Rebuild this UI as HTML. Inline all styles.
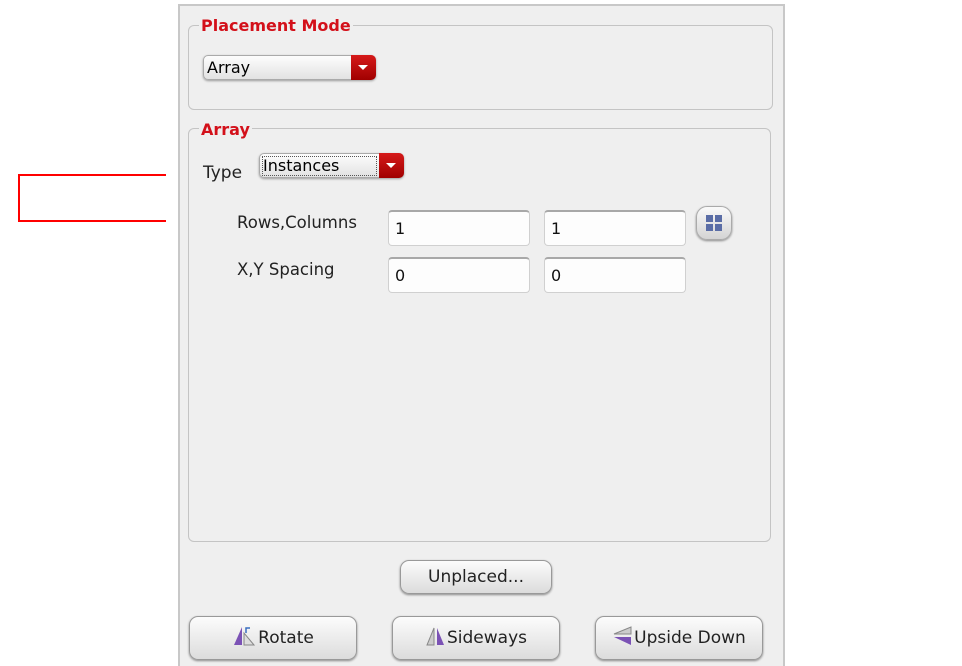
<!DOCTYPE html>
<html><head><style>
body{margin:0;width:962px;height:653px;background:#fff;position:relative;overflow:hidden;font-family:"DejaVu Sans","Liberation Sans",sans-serif;}
.panel{position:absolute;left:178px;top:4px;width:603px;height:660px;background:#efefef;border-left:2px solid #c8c8c8;border-right:2px solid #c8c8c8;border-top:2px solid #c8c8c8;}
.grp{position:absolute;border:1px solid #c4c4c4;border-radius:6px;}
.lg{position:absolute;color:#d3101a;font-weight:bold;font-size:16px;background:#efefef;padding:0 2px;}
.combo{position:absolute;height:25px;border:1px solid #aaa;border-radius:5px;background:linear-gradient(#fdfdfd,#e2e2e2);box-shadow:0 1px 2px #999;font-size:16px;box-sizing:border-box;}
.combo .arr{position:absolute;right:-1px;top:-1px;width:25px;height:25px;background:linear-gradient(#d61a1a,#a00000);border-radius:0 5px 5px 0;}
.combo .arr:after{content:"";position:absolute;left:7px;top:10px;border-left:5px solid transparent;border-right:5px solid transparent;border-top:5px solid #fff;}
.lbl{position:absolute;font-size:16.5px;color:#222;}
.inp{position:absolute;width:142px;height:36px;box-sizing:border-box;background:#fdfdfd;border:1px solid #d0d0d0;border-top:2px solid #a8a8a8;border-radius:4px;font-size:16px;padding:7px 6px;color:#111;}
.btn{position:absolute;height:34px;box-sizing:border-box;border:1px solid #999;border-radius:9px;background:linear-gradient(#fcfcfc,#dcdcdc);box-shadow:0 1px 2px #888;font-size:17px;color:#222;text-align:center;line-height:32px;}
</style></head><body>
<div style="position:absolute;left:18px;top:174px;width:146px;height:44px;border:2px solid #f00;border-right:none;"></div>
<div class="panel"></div>
<div class="grp" style="left:188px;top:25px;width:583px;height:83px;"></div>
<div class="lg" style="left:199px;top:16px;">Placement Mode</div>
<div class="combo" style="left:203px;top:55px;width:173px;"><span style="position:absolute;left:3px;top:2px;">Array</span><div class="arr"></div></div>
<div class="grp" style="left:188px;top:128px;width:581px;height:412px;"></div>
<div class="lg" style="left:199px;top:120px;">Array</div>
<div class="lbl" style="left:203px;top:163px;font-size:17px;">Type</div>
<div class="combo" style="left:259px;top:153px;width:145px;"><span style="position:absolute;left:2px;top:2px;border:1px dotted #555;width:113px;height:18px;line-height:17px;">Instances</span><div class="arr"></div></div>
<div class="lbl" style="left:237px;top:213px;">Rows,Columns</div>
<div class="lbl" style="left:237px;top:260px;">X,Y Spacing</div>
<div class="inp" style="left:388px;top:210px;">1</div>
<div class="inp" style="left:544px;top:210px;">1</div>
<div class="inp" style="left:388px;top:257px;">0</div>
<div class="inp" style="left:544px;top:257px;">0</div>
<div style="position:absolute;left:696px;top:206px;width:34px;height:32px;border-radius:11px;background:linear-gradient(#fafafa,#d4d4d4);border:1px solid #aaa;box-shadow:0 1px 2px #888;">
<svg width="34" height="32" style="position:absolute;left:0;top:0"><g fill="#5a6da6"><rect x="9" y="8" width="7" height="7"/><rect x="18" y="8" width="7" height="7"/><rect x="9" y="17" width="7" height="7"/><rect x="18" y="17" width="7" height="7"/></g></svg></div>
<div class="btn" style="left:400px;top:560px;width:152px;">Unplaced...</div>
<div class="btn" style="left:189px;top:616px;width:168px;height:44px;line-height:42px;"><svg width="26" height="22" style="vertical-align:-4px"><path d="M10 2 L10 20 L2 20Z" fill="#7b52b5"/><path d="M12 8 L12 20 L22 20Z" fill="#ddd" stroke="#888"/><path d="M14 8 L14 3 L18 3" fill="none" stroke="#3a6ec0" stroke-width="1.5"/></svg>Rotate</div>
<div class="btn" style="left:392px;top:616px;width:168px;height:44px;line-height:42px;"><svg width="22" height="22" style="vertical-align:-4px"><path d="M9 3 L9 20 L2 20Z" fill="#ccc" stroke="#888"/><path d="M12 3 L12 20 L19 20Z" fill="#7b52b5"/></svg>Sideways</div>
<div class="btn" style="left:595px;top:616px;width:168px;height:44px;line-height:42px;"><svg width="22" height="22" style="vertical-align:-4px"><path d="M19 2 L19 9 L2 9Z" fill="#ccc" stroke="#888"/><path d="M19 12 L19 20 L2 12Z" fill="#7b52b5"/></svg>Upside Down</div>
</body></html>
